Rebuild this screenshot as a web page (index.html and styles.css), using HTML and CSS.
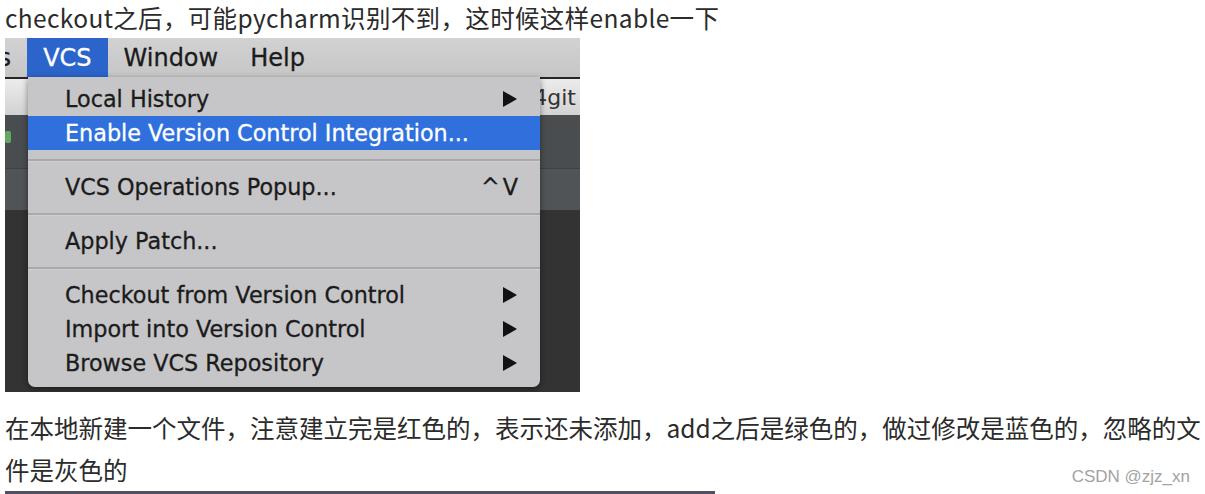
FILE: index.html
```html
<!DOCTYPE html>
<html lang="zh-CN">
<head>
  <meta charset="UTF-8">
  <title>pycharm vcs</title>
  <link rel="stylesheet" href="styles.css">
</head>
<body>
  <div class="article">
    <p class="lead">checkout之后，可能pycharm识别不到，这时候这样enable一下</p>

    <div class="shot">
      <div class="menubar">
        <span class="mb-item">Tools</span>
        <span class="mb-item active">VCS</span>
        <span class="mb-item">Window</span>
        <span class="mb-item">Help</span>
      </div>
      <div class="ide">
        <div class="band tabs"><span class="tab-text">4git</span></div>
        <div class="band toolbar"><span class="run-icon"></span></div>
        <div class="band navbar"></div>
        <div class="band editor"></div>

        <ul class="menu">
          <li class="item"><span>Local History</span><svg class="arrow" width="14" height="16" viewBox="0 0 14 16"><polygon points="0,0 14,8 0,16" fill="#111"/></svg></li>
          <li class="item selected"><span>Enable Version Control Integration...</span></li>
          <li class="sep"></li>
          <li class="item"><span>VCS Operations Popup...</span><span class="shortcut">^V</span></li>
          <li class="sep"></li>
          <li class="item"><span>Apply Patch...</span></li>
          <li class="sep"></li>
          <li class="item"><span>Checkout from Version Control</span><svg class="arrow" width="14" height="16" viewBox="0 0 14 16"><polygon points="0,0 14,8 0,16" fill="#111"/></svg></li>
          <li class="item"><span>Import into Version Control</span><svg class="arrow" width="14" height="16" viewBox="0 0 14 16"><polygon points="0,0 14,8 0,16" fill="#111"/></svg></li>
          <li class="item"><span>Browse VCS Repository</span><svg class="arrow" width="14" height="16" viewBox="0 0 14 16"><polygon points="0,0 14,8 0,16" fill="#111"/></svg></li>
        </ul>
      </div>
    </div>

    <div class="post">
      <p class="para">在本地新建一个文件，注意建立完是红色的，表示还未添加，add之后是绿色的，做过修改是蓝色的，忽略的文件是灰色的</p>
      <span class="watermark">CSDN @zjz_xn</span>
    </div>
    <div class="rule"></div>
  </div>
</body>
</html>
```

FILE: styles.css
```css
body {
margin: 0;
background-color: #fff;
font-family: "Noto Sans CJK SC", "Liberation Sans", sans-serif;
color: #2b2b2b;
overflow: hidden;
}

.article {
padding: 0 0 0 5px;
}

.lead {
margin: 0;
font-size: 24.5px;
letter-spacing: 0.35px;
line-height: 36px;
padding-bottom: 2px;
}

/* screenshot of the IDE menu */
.shot {
width: 575px;
height: 354px;
overflow: hidden;
font-family: "DejaVu Sans", sans-serif;
font-size: 22px;
color: #1b1b1b;
}

.menubar {
display: flex;
height: 39px;
align-items: stretch;
margin-left: -69px;
font-size: 24px;
background: linear-gradient(#d2d2d2, #c6c6c6);
}
.mb-item {
display: flex;
align-items: center;
padding: 0 16px;
-webkit-text-stroke: 0.3px currentColor;
}
.mb-item.active {
background-color: #2b64ca;
color: #fff;
}

.ide {
position: relative;
height: 315px;
display: flex;
flex-direction: column;
border-top: 2px solid #262626;
box-sizing: border-box;
}
.band {
display: flex;
align-items: center;
}
.tabs {
height: 36px;
justify-content: flex-end;
padding-right: 4px;
background: linear-gradient(#ececec, #d2d2d2);
color: #333;
}
.toolbar {
height: 53px;
background-color: #4a4d50;
}
.run-icon {
width: 6px;
height: 12px;
margin-top: -10px;
background-color: #62a862;
border-radius: 2px;
}
.navbar {
height: 42px;
background-color: #505457;
border-top: 1px solid #3e4144;
box-sizing: border-box;
}
.editor {
flex: 1;
background-color: #333333;
}

.menu {
position: absolute;
left: 23px;
top: -2px;
width: 512px;
height: 310px;
margin: 0;
padding: 5px 0 0;
list-style: none;
box-sizing: border-box;
font-size: 22.3px;
background-color: #c6c6c8;
border-radius: 0 0 7px 7px;
box-shadow: 0 2px 6px rgba(0, 0, 0, 0.45);
}
.item {
display: flex;
align-items: center;
justify-content: space-between;
height: 34px;
padding: 0 23px 0 37px;
-webkit-text-stroke: 0.3px currentColor;
}
.item.selected {
background-color: #3070dd;
color: #fff;
}
.shortcut {
margin-right: -4px;
letter-spacing: 3px;
}
.sep {
height: 20px;
display: flex;
align-items: center;
}
.sep::before {
content: "";
flex: 1;
height: 2px;
background-color: #a9a9ab;
border-bottom: 1px solid #cfcfd1;
}

.post {
position: relative;
margin-top: 15px;
}
.para {
margin: 0;
font-size: 24.5px;
line-height: 42px;
}
.watermark {
position: absolute;
right: 15px;
bottom: 4px;
font-family: "Liberation Sans", sans-serif;
font-size: 17px;
color: #a3a3a3;
}
.rule {
width: 710px;
height: 3px;
background-color: #505060;
}
```
